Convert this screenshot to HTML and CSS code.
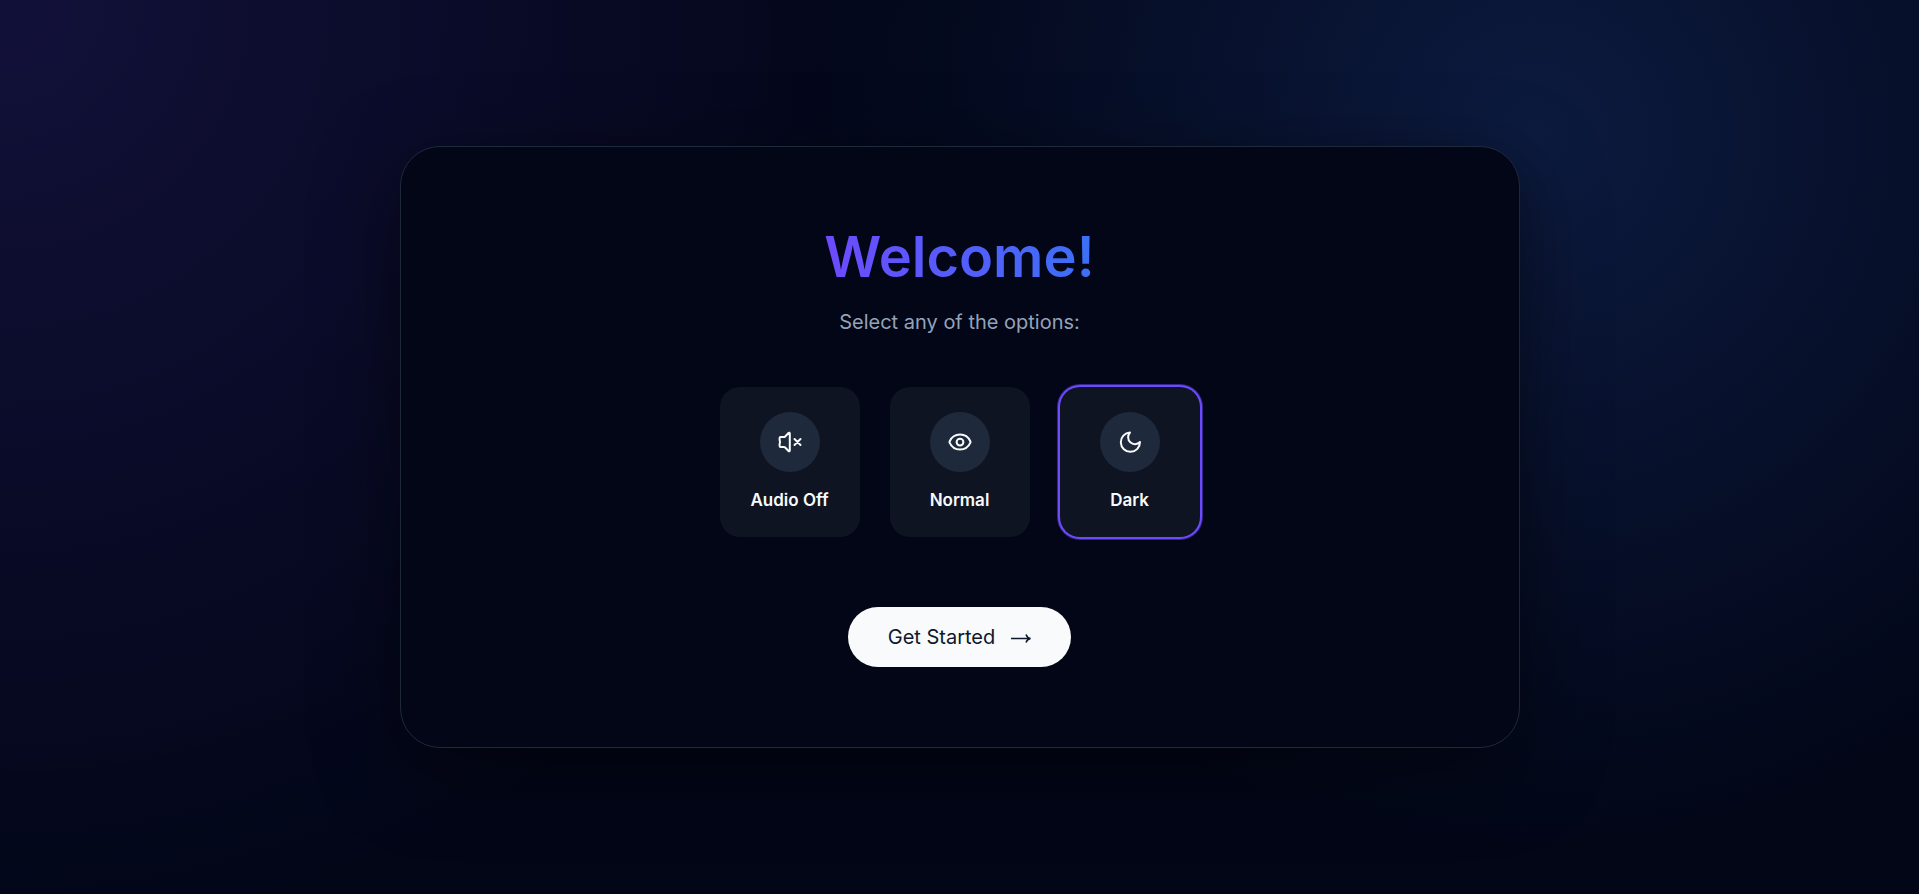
FILE: index.html
```html
<!DOCTYPE html>
<html lang="en">
<head>
<meta charset="utf-8">
<meta name="viewport" content="width=device-width, initial-scale=1">
<title>Welcome</title>
<link rel="stylesheet" href="styles.css">
</head>
<body>
<main class="panel">
  <h1 class="title">Welcome!</h1>
  <p class="subtitle">Select any of the options:</p>
  <div class="options">
    <button class="option" type="button" aria-pressed="false">
      <span class="option-icon">
        <svg class="icon" viewBox="0 0 24 24" aria-hidden="true"><path d="M11.800 3.600c0-.9-.7-1.200-1.300-.6L7.200 6.500a2 2 0 0 1-1.400.6H2.600a1 1 0 0 0-1 1v1.900c.6 1.300.6 2.700 0 4v1.900a1 1 0 0 0 1 1h3.200a2 2 0 0 1 1.400.6l3.300 3.500c.6.600 1.300.3 1.300-.6z"/><path d="m16.500 9 6 6M22.500 9l-6 6"/></svg>
      </span>
      <span class="option-label">Audio Off</span>
    </button>
    <button class="option" type="button" aria-pressed="false">
      <span class="option-icon">
        <svg class="icon" viewBox="0 0 24 24" aria-hidden="true"><path d="M1.600 12.700a1.500 1.500 0 0 1 0-1.200C3.500 7.300 7.400 4.600 12 4.600s8.500 2.700 10.400 6.900a1.500 1.500 0 0 1 0 1.200c-1.900 4.200-5.800 6.900-10.400 6.900s-8.500-2.700-10.400-6.900Z"/><circle cx="12" cy="12.100" r="3.400"/></svg>
      </span>
      <span class="option-label">Normal</span>
    </button>
    <button class="option option-selected" type="button" aria-pressed="true">
      <span class="option-icon">
        <svg class="icon" viewBox="0 0 24 24" aria-hidden="true"><path d="M12 2.600a6.600 6.600 0 0 0 10 9.400A9.600 9.600 0 1 1 12 2.600Z"/></svg>
      </span>
      <span class="option-label">Dark</span>
    </button>
  </div>
  <button class="start" type="button">
    <span>Get Started</span>
    <svg class="arrow" viewBox="0 0 20 20" aria-hidden="true"><path d="M0 11.500h19M15 7.500c.8 2.200 2.200 3.500 4.500 4-2.300.5-3.700 1.800-4.500 4"/></svg>
  </button>
</main>
</body>
</html>
```
FILE: styles.css
```css
* {
  box-sizing: border-box;
}

body {
  margin: 0;
  min-height: 100vh;
  display: flex;
  align-items: center;
  justify-content: center;
  padding: 24px;
  background:
    radial-gradient(circle at 0% 0%, rgba(109, 76, 255, 0.15), transparent 45%),
    radial-gradient(circle at 80% 15%, rgba(59, 120, 246, 0.18), transparent 42%),
    #020617;
  color: #f8fafc;
  font-family: "Inter", "Liberation Sans", sans-serif;
}

.panel {
  width: 100%;
  max-width: 1120px;
  display: flex;
  flex-direction: column;
  align-items: center;
  padding: 74px 60px 80px;
  border: 1px solid #1e293b;
  border-radius: 40px;
  background: #020617;
  box-shadow: 0 20px 80px rgba(0, 0, 0, 0.5);
}

.title {
  margin: 0 0 14px;
  font-size: 56px;
  line-height: 72px;
  font-weight: 600;
  background: linear-gradient(90deg, #6d4aff, #3b70f6);
  background-clip: text;
  -webkit-background-clip: text;
  color: transparent;
}

.subtitle {
  margin: 0 0 50px;
  font-size: 20px;
  line-height: 30px;
  color: #94a3b8;
}

.options {
  display: flex;
  flex-wrap: wrap;
  justify-content: center;
  gap: 30px;
  margin-bottom: 70px;
}

.option {
  width: 140px;
  height: 150px;
  display: flex;
  flex-direction: column;
  align-items: center;
  justify-content: center;
  gap: 16px;
  padding: 0;
  border: 0;
  border-radius: 20px;
  background: #0f1422;
  color: #f8fafc;
  font: 600 17px/24px "Inter", "Liberation Sans", sans-serif;
  cursor: pointer;
}

.option-selected {
  box-shadow: 0 0 0 2px #6d4aff, 0 0 0 3px rgba(109, 74, 255, 0.5);
}

.option-icon {
  display: flex;
  align-items: center;
  justify-content: center;
  width: 60px;
  height: 60px;
  border-radius: 50%;
  background: #1e293b;
}

.icon {
  width: 24px;
  height: 24px;
  fill: none;
  stroke: currentColor;
  stroke-width: 2;
  stroke-linecap: round;
  stroke-linejoin: round;
}

.start {
  display: flex;
  align-items: center;
  gap: 16px;
  height: 60px;
  padding: 0 40px;
  border: 0;
  border-radius: 30px;
  background: #f8fafc;
  color: #0f172a;
  font: 400 20px/24px "Inter", "Liberation Sans", sans-serif;
  cursor: pointer;
}

.arrow {
  width: 20px;
  height: 20px;
  fill: none;
  stroke: currentColor;
  stroke-width: 1.5;
}
```
